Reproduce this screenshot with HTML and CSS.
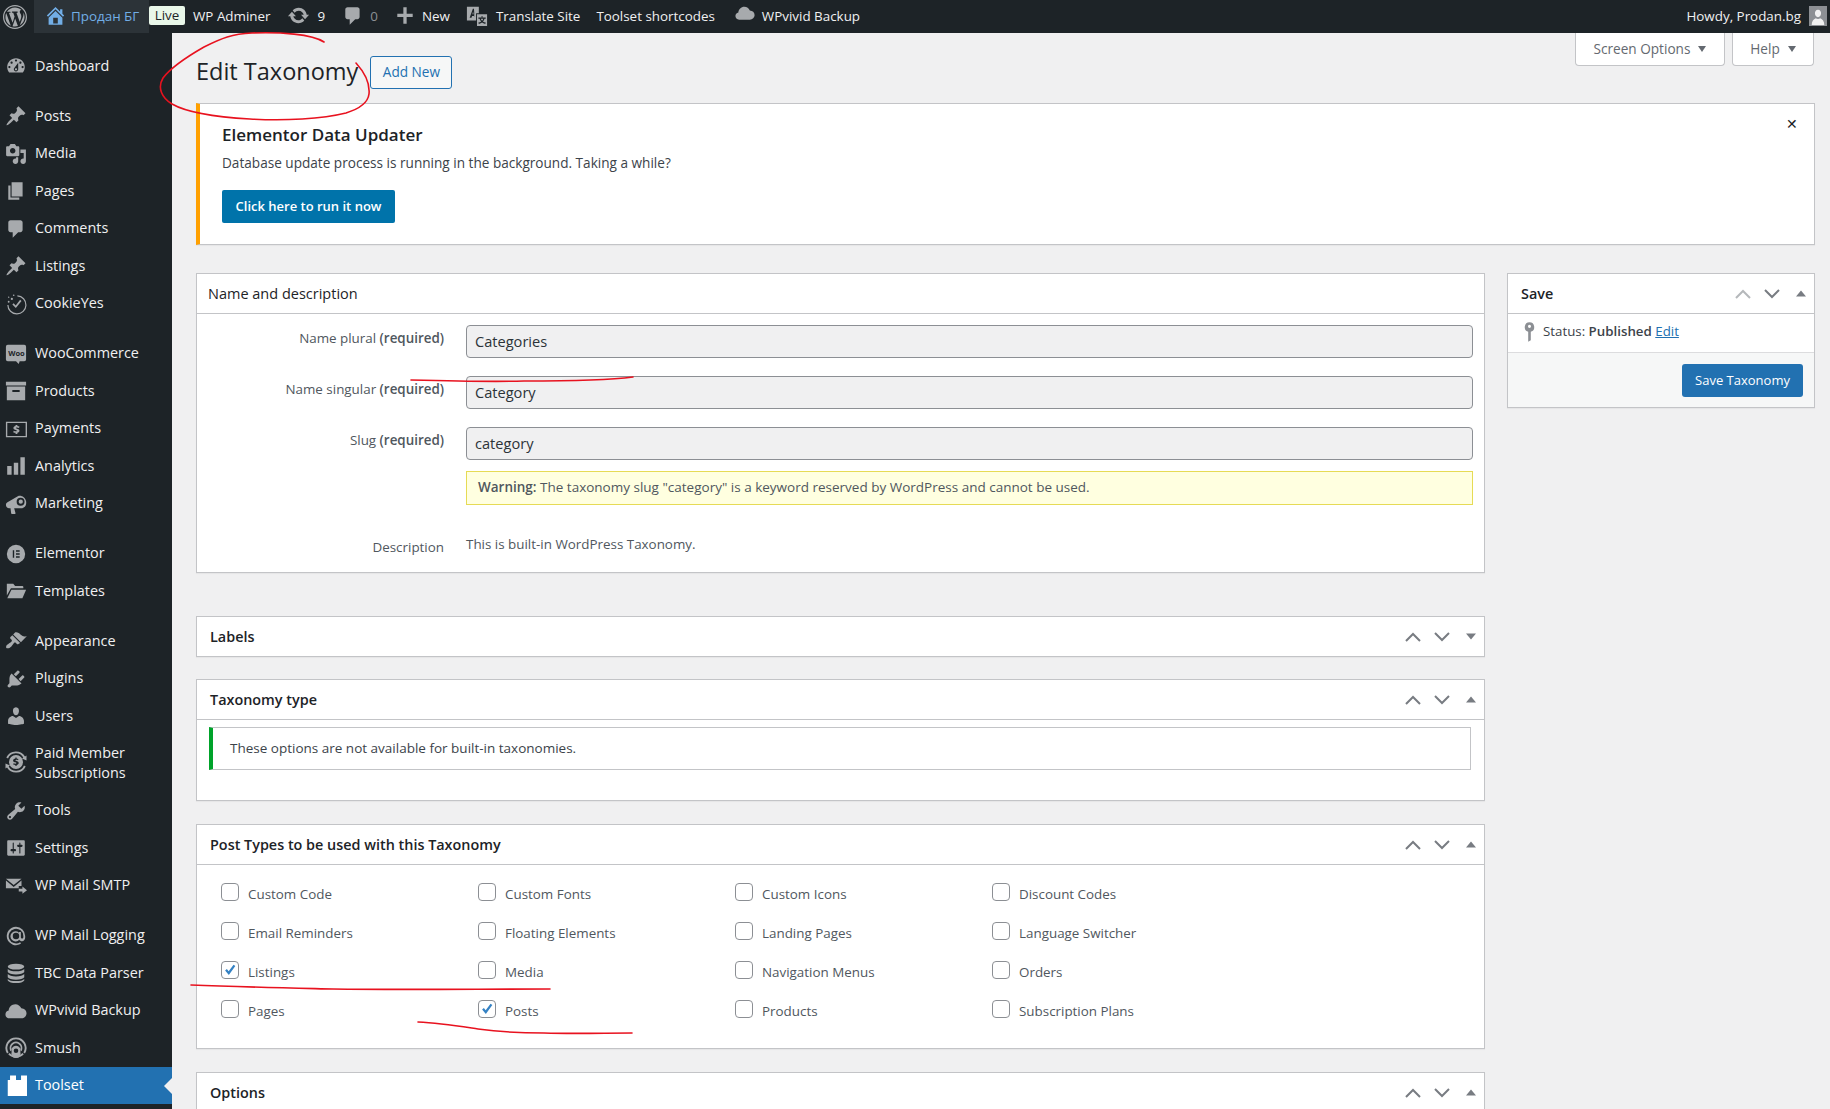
FILE: index.html
```html
<!DOCTYPE html>
<html>
<head>
    <meta charset="utf-8">
    <title>Edit Taxonomy</title>
    <link rel="stylesheet" href="styles.css">
</head>
<body>
<!-- icon sprite -->
<svg class="sprite" xmlns="http://www.w3.org/2000/svg">
    <symbol id="i-wp" viewBox="0 0 20 20"><path d="M20 10c0-5.52-4.48-10-10-10S0 4.48 0 10s4.48 10 10 10 10-4.48 10-10zM10 1.01c4.96 0 8.99 4.03 8.99 8.99s-4.03 8.99-8.99 8.99S1.01 14.96 1.01 10 5.04 1.01 10 1.01zM8.01 14.82L4.96 6.61c.49-.03 1.05-.08 1.05-.08.43-.05.38-1.01-.06-.99 0 0-1.29.1-2.13.1-.15 0-.33 0-.52-.01 1.44-2.17 3.9-3.6 6.7-3.6 2.09 0 3.99.79 5.41 2.09-.6-.08-1.45.35-1.45 1.42 0 .66.38 1.22.79 1.88.31.54.5 1.22.5 2.21 0 1.34-1.27 4.48-1.27 4.48l-2.71-7.5c.48-.03.75-.16.75-.16.43-.05.38-1.1-.05-1.08 0 0-1.3.11-2.14.11-.78 0-2.11-.11-2.11-.11-.43-.02-.48 1.06-.05 1.08l.84.08 1.12 3.04zm6.02 2.15L16.64 10s.67-1.69.39-3.81c.63 1.14.94 2.42.94 3.81 0 2.96-1.56 5.58-3.94 6.97zM2.68 6.77L6.5 17.25c-2.67-1.3-4.47-4.08-4.47-7.25 0-1.16.2-2.23.65-3.23zm7.45 4.53l2.29 6.25c-.75.27-1.57.42-2.42.42-.72 0-1.41-.11-2.06-.3z"/></symbol>
    <symbol id="i-home" viewBox="0 0 20 20"><path d="M16 8.5l1.53 1.53-1.06 1.06L10 4.62l-6.47 6.47-1.06-1.06L10 2.5l4 4v-2h2v4zm-6-2.46l6 5.99V18H4v-5.97zM12 17v-5H8v5h4z"/></symbol>
    <symbol id="i-update" viewBox="0 0 20 20"><path d="M10.2 3.28c3.53 0 6.43 2.61 6.92 6h2.08l-3.5 4-3.5-4h2.32c-.45-1.97-2.21-3.45-4.32-3.45-1.45 0-2.73.71-3.54 1.78L4.95 5.66C6.23 4.2 8.11 3.28 10.2 3.28zm-.4 13.44c-3.52 0-6.43-2.61-6.92-6H.8l3.5-4c1.17 1.33 2.33 2.67 3.5 4H5.48c.45 1.97 2.21 3.45 4.32 3.45 1.45 0 2.73-.71 3.54-1.78l1.71 1.95c-1.28 1.46-3.15 2.38-5.25 2.38z"/></symbol>
    <symbol id="i-comment" viewBox="0 0 20 20"><path d="M5 2h9c1.1 0 2 .9 2 2v7c0 1.1-.9 2-2 2h-2l-5 5v-5H5c-1.1 0-2-.9-2-2V4c0-1.1.9-2 2-2z"/></symbol>
    <symbol id="i-plus" viewBox="0 0 20 20"><path d="M17 8v3h-5.500v6h-3v-6H3V8h5.500V2h3v6z"/></symbol>
    <symbol id="i-translate" viewBox="0 0 24 24"><path d="M1 2h13v7h-3v8H1zM7.500 4 4 14h2l.6-2h2l.4 1V8.500L8.700 4zM7 10l.7-3 .6 3z" fill-rule="evenodd"/><path d="M12 10h11v13H12zM17 12v1.500h-3.500V15h1.300c.4 1.200 1 2.200 1.700 3-.8.600-1.800 1-3 1.200l.5 1.400c1.400-.3 2.600-.8 3.500-1.500.9.700 2 1.200 3.500 1.500l.5-1.400c-1.200-.2-2.200-.6-3-1.200.8-.8 1.400-1.800 1.700-3h1.300v-1.500H18V12zm-.9 3h2.800c-.2.800-.7 1.500-1.400 2.100-.7-.6-1.200-1.300-1.400-2.100z" fill-rule="evenodd"/></symbol>
    <symbol id="i-cloud" viewBox="0 0 24 20"><path d="M5 18c-2.800 0-4.500-2-4.500-4.300 0-2.100 1.400-3.800 3.500-4.200C4.300 5.500 7.400 2.500 11.200 2.500c3 0 5.500 1.800 6.600 4.500 3.300.1 5.700 2.400 5.700 5.500 0 3.100-2.500 5.500-5.700 5.500z"/></symbol>
    <symbol id="i-dashboard" viewBox="0 0 20 20"><path d="M3.760 16h12.480c1.100-1.370 1.760-3.110 1.760-5 0-4.420-3.580-8-8-8s-8 3.580-8 8c0 1.890.66 3.630 1.760 5zM10 4c.55 0 1 .45 1 1s-.45 1-1 1-1-.45-1-1 .45-1 1-1zM6 6c.55 0 1 .45 1 1s-.45 1-1 1-1-.45-1-1 .45-1 1-1zm8 0c.55 0 1 .45 1 1s-.45 1-1 1-1-.45-1-1 .45-1 1-1zm-5.370 5.550L12 7v6c0 1.100-.9 2-2 2s-2-.9-2-2c0-.57.24-1.080.63-1.450zM4 10c.55 0 1 .45 1 1s-.45 1-1 1-1-.45-1-1 .45-1 1-1zm12 0c.55 0 1 .45 1 1s-.45 1-1 1-1-.45-1-1 .45-1 1-1zm-5 3c0-.55-.45-1-1-1s-1 .45-1 1 .45 1 1 1 1-.45 1-1z"/></symbol>
    <symbol id="i-pin" viewBox="0 0 20 20"><path d="M10.440 3.020l1.820-1.820 6.360 6.350-1.830 1.820c-1.050-.68-2.480-.57-3.410.36l-.75.75c-.92.93-1.040 2.350-.35 3.410l-1.830 1.820-2.410-2.410-2.800 2.790c-.42.42-3.380 2.710-3.800 2.290s1.860-3.390 2.280-3.810l2.790-2.790L4.100 9.360l1.830-1.820c1.050.69 2.480.57 3.400-.36l.75-.75c.93-.92 1.050-2.350.36-3.410z"/></symbol>
    <symbol id="i-media" viewBox="0 0 20 20"><path d="M13 11V4c0-.55-.45-1-1-1h-1.670L9 1H5L3.670 3H2c-.55 0-1 .45-1 1v7c0 .55.45 1 1 1h10c.55 0 1-.45 1-1zM7 4.500c1.380 0 2.500 1.120 2.500 2.500S8.380 9.500 7 9.500 4.500 8.380 4.500 7 5.620 4.500 7 4.500zM14 6h5v10.500c0 1.380-1.120 2.500-2.500 2.500S14 17.880 14 16.500s1.120-2.500 2.500-2.500c.17 0 .34.02.5.05V9h-3V6zm-4 8.050V13h2v3.500c0 1.380-1.120 2.500-2.500 2.500S7 17.880 7 16.500 8.120 14 9.500 14c.17 0 .34.02.5.05z"/></symbol>
    <symbol id="i-page" viewBox="0 0 20 20"><path d="M6 15V2h10v13H6zm-1 1h8v2H3V5h2v11z"/></symbol>
    <symbol id="i-cookie" viewBox="0 0 24 24"><path d="M13.500 2.500a10.500 10.500 0 1 1-11 10.500h1.300a9.200 9.200 0 1 0 9.700-9.200z"/><path d="M8 12.500l1.400-1.300 2.300 2.400 4.800-6.200 1.500 1.200-6.200 7.800z"/><circle cx="4" cy="9.500" r="1"/><circle cx="7.500" cy="6.500" r="1.200"/><circle cx="9.500" cy="2.500" r=".9"/><circle cx="4" cy="4.500" r=".8"/></symbol>
    <symbol id="i-woo" viewBox="0 0 24 24"><path d="M3 2h18a2 2 0 0 1 2 2v14a2 2 0 0 1-2 2h-5l-1 3-3-3H3a2 2 0 0 1-2-2V4a2 2 0 0 1 2-2z"/></symbol>
    <symbol id="i-box" viewBox="0 0 24 24"><path d="M1 2h22v4H1zM2 7h20v15H2zM8 11v2h8v-2z" fill-rule="evenodd"/></symbol>
    <symbol id="i-pay" viewBox="0 0 24 24"><path d="M1 4h23v17H1zM2.500 5.500v14h20v-14z" fill-rule="evenodd"/><path d="M11.500 7.500h2v1.200c1 .1 1.700.3 2.300.6l-.5 1.600c-1.300-.6-3.300-.8-3.300 0 0 1.100 3.800.5 3.800 3 0 1.200-.9 2-2.300 2.200v1.400h-2v-1.300c-1-.1-1.800-.3-2.500-.7l.5-1.600c1.400.7 3.500 1 3.500.1 0-1.100-3.800-.5-3.800-3 0-1.200.9-2 2.300-2.200z"/></symbol>
    <symbol id="i-bars" viewBox="0 0 20 20"><path d="M18 18V2h-4v16h4zm-6 0V7H8v11h4zm-6 0v-8H2v8h4z"/></symbol>
    <symbol id="i-mega" viewBox="0 0 24 24"><path d="M1 13c0-1.500.7-2.600 1.700-3L14 3.500c3.500-1.500 8 1 9 5.500.8 4.500-2 8-6 7.500H10l1.500 5.500c0 .5-.2.800-.7.800H7.500c-.4 0-.7-.3-.8-.7L6 16.500H4.500C2.600 16.500 1 15 1 13z"/><circle cx="17" cy="9.500" r="4.300" fill="#1d2327"/><circle cx="17.200" cy="9.500" r="2.300"/></symbol>
    <symbol id="i-elementor" viewBox="0 0 24 24"><path d="M12 2a10 10 0 1 0 0 20 10 10 0 0 0 0-20zM8.500 8h1.500v8H8.500zM12 8h4v1.500h-4zM12 11.250h4v1.500h-4zM12 14.500h4V16h-4z" fill-rule="evenodd"/></symbol>
    <symbol id="i-folder" viewBox="0 0 24 24"><path d="M2 4h7l2 2.500h8c.6 0 1 .4 1 1V9H6.500L2 17z"/><path d="M7 10.500h16l-4 9.500H2.500z"/></symbol>
    <symbol id="i-brush" viewBox="0 0 20 20"><path d="M14.480 11.060L7.410 3.990l1.500-1.500c.5-.56 2.300-.47 3.510.32 1.210.8 1.430 1.280 2.910 2.100 1.180.64 2.450 1.260 4.450.85zm-.71.71L6.700 4.700 4.930 6.470c-.39.39-.39 1.020 0 1.410l1.060 1.060c.39.39.39 1.030 0 1.420-.6.6-1.430 1.110-2.210 1.690-.35.26-.7.53-1.010.84C1.430 13.230.91 14.270 1.020 16c.02.36.31.65.67.67 1.730.11 2.770-.41 4.120-1.750.31-.31.58-.66.84-1.010.58-.78 1.090-1.610 1.690-2.210.39-.39 1.030-.39 1.420 0l1.060 1.060c.39.39 1.020.39 1.410 0z"/></symbol>
    <symbol id="i-plug" viewBox="0 0 20 20"><path d="M13.110 4.360L9.870 7.600 8 5.730l3.240-3.240c.35-.34 1.050-.2 1.560.32.52.51.66 1.210.31 1.550zm-8 1.770l.91-1.120 9.010 9.010-1.190.84c-.71.71-2.630 1.160-3.820 1.160H6.140L4.900 17.260c-.59.59-1.540.59-2.120 0-.59-.58-.59-1.530 0-2.120l1.240-1.240v-3.880c0-1.130.4-3.190 1.090-3.890zm7.260 3.970l3.240-3.240c.34-.35 1.040-.21 1.550.31.52.51.66 1.210.31 1.550l-3.240 3.250z"/></symbol>
    <symbol id="i-users" viewBox="0 0 20 20"><path d="M10 9.250c-2.270 0-2.730-3.440-2.730-3.440C7 4.020 7.820 2 9.970 2c2.160 0 2.980 2.020 2.710 3.810 0 0-.41 3.440-2.680 3.440zm0 2.570L12.720 10c2.390 0 4.520 2.330 4.520 4.530v2.490s-3.650 1.130-7.240 1.130c-3.650 0-7.240-1.130-7.240-1.130v-2.490c0-2.250 1.940-4.480 4.470-4.480z"/></symbol>
    <symbol id="i-paid" viewBox="0 0 24 24"><path d="M12 1.500a10.500 10.500 0 0 1 9 5l1.500-1v5l-4.500-2 1.300-.9A8.500 8.500 0 0 0 4 8.500L2.300 7.500A10.500 10.500 0 0 1 12 1.500zM12 22.500a10.500 10.500 0 0 1-9-5l-1.500 1v-5l4.500 2-1.300.9A8.500 8.500 0 0 0 20 15.500l1.700 1a10.500 10.500 0 0 1-9.700 6z"/><path d="M12 5a7 7 0 1 0 0 14 7 7 0 0 0 0-14zm-.6 2.500h1.200v1c.6.100 1.200.2 1.800.5l-.4 1.200c-1.200-.5-2.500-.5-2.500.2 0 1 3.200.2 3.200 2.500 0 1-.8 1.800-2.100 2v1.100h-1.200v-1c-.8-.1-1.500-.2-2.200-.5l.4-1.200c1.100.5 2.800.6 2.800-.2 0-1.100-3.300-.2-3.300-2.500 0-1.100.9-1.900 2.300-2.100z" fill-rule="evenodd"/></symbol>
    <symbol id="i-wrench" viewBox="0 0 20 20"><path d="M16.680 9.770c-1.340 1.340-3.300 1.670-4.950.99l-5.410 6.520c-.99.99-2.590.99-3.580 0s-.99-2.590 0-3.570l6.520-5.420c-.68-1.650-.35-3.610.99-4.950 1.280-1.280 3.120-1.620 4.720-1.060l-2.890 2.890 2.820 2.820 2.860-2.870c.53 1.580.18 3.390-1.080 4.650zM3.810 16.210c.4.39 1.040.39 1.430 0 .4-.4.4-1.040 0-1.430-.39-.4-1.030-.4-1.430 0-.39.39-.39 1.030 0 1.430z"/></symbol>
    <symbol id="i-settings" viewBox="0 0 20 20"><path d="M18 16V4c0-.55-.45-1-1-1H3c-.55 0-1 .45-1 1v12c0 .55.45 1 1 1h14c.55 0 1-.45 1-1zM8 11h1c.55 0 1 .45 1 1s-.45 1-1 1H8v1.500c0 .28-.22.5-.5.5s-.5-.22-.5-.5V13H6c-.55 0-1-.45-1-1s.45-1 1-1h1V5.500c0-.28.22-.5.5-.5s.5.22.5.5V11zm5-2h-1c-.55 0-1-.45-1-1s.45-1 1-1h1V5.500c0-.28.22-.5.5-.5s.5.22.5.5V7h1c.55 0 1 .45 1 1s-.45 1-1 1h-1v5.500c0 .28-.22.5-.5.5s-.5-.22-.5-.5V9z"/></symbol>
    <symbol id="i-mail" viewBox="0 0 24 24"><path d="M1 4h17L9.500 11zM1 6l8.500 7L18 6v6h-3v2.500H1z"/><path d="M15 15h4v-2.500l5 4-5 4V18h-4z"/></symbol>
    <symbol id="i-at" viewBox="0 0 24 24"><path d="M12 2a10 10 0 1 0 5.500 18.300l-1-1.600A8 8 0 1 1 20 12v1c0 1-.6 1.800-1.400 1.800s-1.300-.7-1.300-1.700V7.500h-2v1A5.500 5.500 0 1 0 15.600 16c.6 1 1.700 1.700 3 1.700 2 0 3.400-1.800 3.400-4V12A10 10 0 0 0 12 2zm0 13.500a3.500 3.500 0 1 1 0-7 3.500 3.500 0 0 1 0 7z"/></symbol>
    <symbol id="i-db" viewBox="0 0 24 24"><ellipse cx="12" cy="5" rx="9" ry="3.200"/><path d="M3 7.500c1.500 1.800 4.500 2.500 9 2.500s7.500-.7 9-2.500V11c-1 1.700-4.500 2.600-9 2.600S4 12.700 3 11zM3 13.200c1.500 1.800 4.500 2.500 9 2.500s7.500-.7 9-2.500v3.500c-1 1.700-4.500 2.600-9 2.600S4 18.400 3 16.700zM3 18.500c1.500 1.700 4.500 2.300 9 2.300s7.500-.6 9-2.300v1.700c-1 1.800-4.500 2.800-9 2.800S4 22 3 20.200z"/></symbol>
    <symbol id="i-smush" viewBox="0 0 24 24"><path d="M12 .5a11.500 11.500 0 0 0-9.800 17.500l1.700-1a9.500 9.500 0 1 1 16.200 0l1.700 1A11.500 11.500 0 0 0 12 .5zm0 4.500a7 7 0 0 0-6 10.500l1.700-1a5 5 0 1 1 8.600 0l1.700 1A7 7 0 0 0 12 5zm0 4.500a5 5 0 0 0-4.700 6.800 5 5 0 1 0 9.400 0A5 5 0 0 0 12 9.500zm0 3a2.500 2.500 0 1 1 0 5 2.500 2.500 0 0 1 0-5z" fill-rule="evenodd"/><path d="M12 20.800a9 9 0 0 1-7-3.300l-1.500 1.200a11.500 11.500 0 0 0 17 0L19 17.500a9 9 0 0 1-7 3.300z"/></symbol>
    <symbol id="i-toolset" viewBox="0 0 24 24"><path d="M3 5.500h2.500V.5h6.500v5h5.500V.5H24V23H3z"/></symbol>
    <symbol id="i-key" viewBox="0 0 12 20"><path d="M6 1a4.500 4.500 0 0 0-1.200 8.800V19l2.400-1.500V9.800A4.500 4.500 0 0 0 6 1zm0 2.400a1.400 1.400 0 1 1 0 2.800 1.400 1.400 0 0 1 0-2.800z" fill-rule="evenodd"/></symbol>
    <symbol id="i-up" viewBox="0 0 16 10"><path d="M1 9l7-7 7 7" fill="none" stroke="currentColor" stroke-width="2"/></symbol>
    <symbol id="i-down" viewBox="0 0 16 10"><path d="M1 1l7 7 7-7" fill="none" stroke="currentColor" stroke-width="2"/></symbol>
    <symbol id="i-open" viewBox="0 0 10 6"><path d="M0 6l5-6 5 6z"/></symbol>
    <symbol id="i-shut" viewBox="0 0 10 6"><path d="M0 0l5 6 5-6z"/></symbol>
</svg>

<div class="adminbar">
    <a class="bar-logo"><svg class="bar-ic wp"><use href="#i-wp"/></svg></a>
    <a class="bar-site"><svg class="bar-ic home"><use href="#i-home"/></svg>Продан БГ</a>
    <span class="live">Live</span>
    <a class="bar-item ml-8">WP Adminer</a>
    <a class="bar-item ml-16"><svg class="bar-ic up"><use href="#i-update"/></svg>9</a>
    <a class="bar-item ml-17 dim"><svg class="bar-ic cm"><use href="#i-comment"/></svg>0</a>
    <a class="bar-item ml-16"><svg class="bar-ic plus"><use href="#i-plus"/></svg>New</a>
    <a class="bar-item ml-16"><svg class="bar-ic tr"><use href="#i-translate"/></svg>Translate Site</a>
    <a class="bar-item ml-16">Toolset shortcodes</a>
    <a class="bar-item ml-20"><svg class="bar-ic cl"><use href="#i-cloud"/></svg>WPvivid Backup</a>
    <a class="bar-howdy">Howdy, Prodan.bg<span class="avatar"><svg viewBox="0 0 20 20"><path d="M10 3c2.400 0 3.600 2 3.400 4.300-.2 2.200-1.400 4-3.400 4s-3.200-1.800-3.400-4C6.400 5 7.600 3 10 3zM3 20c0-4 2-6.500 4.500-7.500 1.500 1 3.500 1 5 0C15 13.500 17 16 17 20z"/></svg></span></a>
</div>

<div class="wrap">
    <nav class="sidebar">
        <a class="menu"><svg><use href="#i-dashboard"/></svg>Dashboard</a>
        <div class="sep"></div>
        <a class="menu"><svg><use href="#i-pin"/></svg>Posts</a>
        <a class="menu"><svg><use href="#i-media"/></svg>Media</a>
        <a class="menu"><svg><use href="#i-page"/></svg>Pages</a>
        <a class="menu"><svg><use href="#i-comment"/></svg>Comments</a>
        <a class="menu"><svg><use href="#i-pin"/></svg>Listings</a>
        <a class="menu"><svg><use href="#i-cookie"/></svg>CookieYes</a>
        <div class="sep"></div>
        <a class="menu"><svg><use href="#i-woo"/></svg><span class="woo-mark">Woo</span>WooCommerce</a>
        <a class="menu"><svg><use href="#i-box"/></svg>Products</a>
        <a class="menu"><svg><use href="#i-pay"/></svg>Payments</a>
        <a class="menu"><svg><use href="#i-bars"/></svg>Analytics</a>
        <a class="menu"><svg><use href="#i-mega"/></svg>Marketing</a>
        <div class="sep"></div>
        <a class="menu"><svg><use href="#i-elementor"/></svg>Elementor</a>
        <a class="menu"><svg><use href="#i-folder"/></svg>Templates</a>
        <div class="sep"></div>
        <a class="menu"><svg><use href="#i-brush"/></svg>Appearance</a>
        <a class="menu"><svg><use href="#i-plug"/></svg>Plugins</a>
        <a class="menu"><svg><use href="#i-users"/></svg>Users</a>
        <a class="menu tall"><svg><use href="#i-paid"/></svg>Paid Member<br>Subscriptions</a>
        <a class="menu"><svg><use href="#i-wrench"/></svg>Tools</a>
        <a class="menu"><svg><use href="#i-settings"/></svg>Settings</a>
        <a class="menu"><svg><use href="#i-mail"/></svg>WP Mail SMTP</a>
        <div class="sep"></div>
        <a class="menu"><svg><use href="#i-at"/></svg>WP Mail Logging</a>
        <a class="menu"><svg><use href="#i-db"/></svg>TBC Data Parser</a>
        <a class="menu"><svg><use href="#i-cloud"/></svg>WPvivid Backup</a>
        <a class="menu"><svg><use href="#i-smush"/></svg>Smush</a>
        <a class="menu current"><svg><use href="#i-toolset"/></svg>Toolset</a>
    </nav>

    <main class="content">
        <div class="meta-tabs">
            <a class="meta-tab screen-tab">Screen Options<i class="caret"></i></a>
            <a class="meta-tab help-tab">Help<i class="caret"></i></a>
        </div>
        <div class="title-row">
            <h1>Edit Taxonomy</h1>
            <a class="add-new">Add New</a>
        </div>

        <div class="update-notice">
            <h2>Elementor Data Updater</h2>
            <p>Database update process is running in the background. Taking a while?</p>
            <a class="run-btn">Click here to run it now</a>
            <span class="dismiss">&#10005;</span>
        </div>

        <div class="columns">
            <div class="col-main">
                <section class="box">
                    <div class="box-head plain"><h3>Name and description</h3></div>
                    <div class="form-grid">
                        <label>Name plural <b>(required)</b></label>
                        <input class="field" type="text" value="Categories" readonly>
                        <label>Name singular <b>(required)</b></label>
                        <input class="field" type="text" value="Category" readonly>
                        <label>Slug <b>(required)</b></label>
                        <div class="slug-cell">
                            <input class="field" type="text" value="category" readonly>
                            <div class="warning"><b>Warning:</b> The taxonomy slug "category" is a keyword reserved by WordPress and cannot be used.</div>
                        </div>
                        <label class="desc-label">Description</label>
                        <div class="desc-value">This is built-in WordPress Taxonomy.</div>
                    </div>
                </section>

                <section class="box labels-box">
                    <div class="box-head closed">
                        <h3>Labels</h3>
                        <div class="handles"><svg class="chev"><use href="#i-up"/></svg><svg class="chev"><use href="#i-down"/></svg><svg class="tri"><use href="#i-shut"/></svg></div>
                    </div>
                </section>

                <section class="box type-box">
                    <div class="box-head">
                        <h3>Taxonomy type</h3>
                        <div class="handles"><svg class="chev"><use href="#i-up"/></svg><svg class="chev"><use href="#i-down"/></svg><svg class="tri"><use href="#i-open"/></svg></div>
                    </div>
                    <div class="type-body">
                        <div class="info-notice">These options are not available for built-in taxonomies.</div>
                    </div>
                </section>

                <section class="box types-box">
                    <div class="box-head">
                        <h3>Post Types to be used with this Taxonomy</h3>
                        <div class="handles"><svg class="chev"><use href="#i-up"/></svg><svg class="chev"><use href="#i-down"/></svg><svg class="tri"><use href="#i-open"/></svg></div>
                    </div>
                    <div class="check-grid">
                        <label class="check"><i class="cb"></i>Custom Code</label>
                        <label class="check"><i class="cb"></i>Custom Fonts</label>
                        <label class="check"><i class="cb"></i>Custom Icons</label>
                        <label class="check"><i class="cb"></i>Discount Codes</label>
                        <label class="check"><i class="cb"></i>Email Reminders</label>
                        <label class="check"><i class="cb"></i>Floating Elements</label>
                        <label class="check"><i class="cb"></i>Landing Pages</label>
                        <label class="check"><i class="cb"></i>Language Switcher</label>
                        <label class="check"><i class="cb on"><svg viewBox="0 0 18 18"><path d="M3.500 9.500l2-1.700 2 2.700L13 3l2 1.500-7.300 10z"/></svg></i>Listings</label>
                        <label class="check"><i class="cb"></i>Media</label>
                        <label class="check"><i class="cb"></i>Navigation Menus</label>
                        <label class="check"><i class="cb"></i>Orders</label>
                        <label class="check"><i class="cb"></i>Pages</label>
                        <label class="check"><i class="cb on"><svg viewBox="0 0 18 18"><path d="M3.500 9.500l2-1.700 2 2.700L13 3l2 1.500-7.300 10z"/></svg></i>Posts</label>
                        <label class="check"><i class="cb"></i>Products</label>
                        <label class="check"><i class="cb"></i>Subscription Plans</label>
                    </div>
                </section>

                <section class="box options-box">
                    <div class="box-head">
                        <h3>Options</h3>
                        <div class="handles"><svg class="chev"><use href="#i-up"/></svg><svg class="chev"><use href="#i-down"/></svg><svg class="tri"><use href="#i-open"/></svg></div>
                    </div>
                </section>
            </div>

            <aside class="col-side">
                <section class="box">
                    <div class="box-head">
                        <h3>Save</h3>
                        <div class="handles"><svg class="chev faded"><use href="#i-up"/></svg><svg class="chev"><use href="#i-down"/></svg><svg class="tri"><use href="#i-open"/></svg></div>
                    </div>
                    <div class="status-row"><svg class="key"><use href="#i-key"/></svg>Status: <b>Published</b> <a class="link">Edit</a></div>
                    <div class="save-foot"><a class="save-btn">Save Taxonomy</a></div>
                </section>
            </aside>
        </div>
    </main>
</div>

<!-- red marker strokes someone drew on the screenshot -->
<svg class="scribble" viewBox="0 0 1830 1109">
    <path d="M324 42C312 34 280 32 252 33C232 34 222 38 204 47C190 55 172 66 163 78C157 88 162 98 172 104C186 112 215 117 250 119C285 121 322 119 346 113C362 108 368 102 369 94C370 84 366 74 356 63"/>
    <path d="M411 380C450 381 490 382 524 381C570 381 610 380 633 377"/>
    <path d="M191 985C240 987 290 988 333 989C400 990 480 989 550 989"/>
    <path d="M418 1022C440 1023 458 1026 478 1029C500 1032 522 1033 544 1033C575 1034 605 1033 632 1033"/>
</svg>
</body>
</html>
```
FILE: styles.css
```css
* {
    box-sizing: border-box;
}

html, body {
    margin: 0;
    padding: 0;
    height: 1109px;
    overflow: hidden;
}

body {
    position: relative;
    font-family: "Open Sans", "Noto Sans", sans-serif;
    font-size: 13.6px;
    line-height: 20px;
    color: #3c434a;
    background-color: #f0f0f1;
}

.sprite {
    display: none;
}

/* top bar */
.adminbar {
    display: flex;
    align-items: center;
    height: 33px;
    background-color: #1d2327;
    color: #f0f0f1;
    font-size: 13.4px;
}

.bar-logo {
    display: flex;
    width: 34px;
    padding-left: 3px;
}

.bar-ic {
    fill: #a7aaad;
    flex: none;
}

.bar-ic.wp { width: 24px; height: 24px; }
.bar-ic.home { width: 23px; height: 23px; margin-right: 4px; fill: #72aee6; }
.bar-ic.up { width: 23px; height: 23px; margin-right: 8px; }
.bar-ic.cm { width: 22px; height: 22px; margin-right: 6px; }
.bar-ic.plus { width: 22px; height: 22px; margin-right: 6px; }
.bar-ic.tr { width: 22px; height: 22px; margin-right: 8px; }
.bar-ic.cl { width: 20px; height: 18px; margin-right: 7px; margin-top: -6px; }

.bar-site {
    display: flex;
    align-items: center;
    height: 33px;
    width: 115px;
    padding: 0 0 2px 10px;
    background-color: #2c3338;
    color: #72aee6;
}

.live {
    display: block;
    width: 36px;
    height: 19px;
    margin-bottom: 2px;
    line-height: 19px;
    text-align: center;
    background-color: #e9f7e9;
    color: #1d2327;
    border-radius: 2px;
}

.bar-item {
    display: flex;
    align-items: center;
    padding-bottom: 2px;
}

.bar-item.dim {
    color: #8c8f94;
}

.ml-8 { margin-left: 8px; }
.ml-16 { margin-left: 16px; }
.ml-17 { margin-left: 17px; }
.ml-20 { margin-left: 20px; }

.bar-howdy {
    display: flex;
    align-items: center;
    margin-left: auto;
    padding: 0 3px 2px 0;
}

.avatar {
    display: block;
    width: 18px;
    height: 20px;
    margin-left: 8px;
    background-color: #8c8f94;
}

.avatar svg {
    display: block;
    width: 18px;
    height: 20px;
    fill: #f0f0f1;
}

/* layout */
.wrap {
    display: flex;
    height: 1076px;
}

.sidebar {
    flex: none;
    display: flex;
    flex-direction: column;
    width: 172px;
    padding-top: 14px;
    background-color: #1d2327;
}

.menu {
    position: relative;
    display: flex;
    align-items: center;
    flex: none;
    height: 37.5px;
    padding-left: 35px;
    color: #f0f0f1;
    font-size: 14.4px;
}

.menu svg {
    position: absolute;
    left: 5px;
    top: 8px;
    width: 22px;
    height: 22px;
    fill: #a7aaad;
}

.menu.tall {
    height: 57px;
    line-height: 20px;
    display: block;
    padding-top: 8px;
}

.menu.tall svg {
    left: 4px;
    top: 15px;
    width: 24px;
    height: 24px;
}

.sep {
    flex: none;
    height: 12.5px;
}

.menu.current {
    background-color: #2271b1;
    color: #fff;
}

.menu.current svg {
    fill: #fff;
}

.menu.current::after {
    content: "";
    position: absolute;
    right: 0;
    top: 11px;
    border: 8px solid transparent;
    border-left-width: 0;
    border-right-color: #f0f0f1;
}

.woo-mark {
    position: absolute;
    left: 8px;
    top: 13px;
    width: 17px;
    text-align: center;
    font-size: 7.5px;
    line-height: 10px;
    font-weight: 700;
    color: #1d2327;
}

.content {
    flex: 1;
    min-width: 0;
    padding: 0 15px 0 24px;
}

.meta-tabs {
    float: right;
    display: flex;
    gap: 7px;
    margin-right: 1px;
}

.meta-tab {
    display: flex;
    align-items: center;
    justify-content: center;
    height: 33px;
    background-color: #fff;
    border: 1px solid #c3c4c7;
    border-top: 0;
    border-radius: 0 0 4px 4px;
    color: #646970;
}

.screen-tab { width: 150px; }
.help-tab { width: 82px; }

.caret {
    display: block;
    margin-left: 8px;
    border: 4.5px solid transparent;
    border-top: 6px solid #646970;
    border-bottom: 0;
}

.title-row {
    display: flex;
    align-items: flex-start;
    height: 70px;
    padding-top: 20px;
}

h1 {
    margin: 0;
    font-size: 23.5px;
    font-weight: 400;
    line-height: 36px;
    color: #1d2327;
}

.add-new {
    display: block;
    height: 33px;
    width: 82px;
    margin: 3px 0 0 12px;
    line-height: 30px;
    text-align: center;
    color: #2271b1;
    background-color: #f6f7f7;
    border: 1px solid #2271b1;
    border-radius: 3px;
}

.update-notice {
    position: relative;
    height: 142px;
    padding: 18px 0 0 22px;
    background-color: #fff;
    border: 1px solid #c3c4c7;
    border-left: 4px solid #ffa000;
    box-shadow: 0 1px 1px rgba(0, 0, 0, 0.04);
}

.update-notice h2 {
    margin: 0;
    font-size: 17px;
    font-weight: 600;
    line-height: 25px;
    color: #1d2327;
}

.update-notice p {
    margin: 6px 0 0;
    line-height: 20px;
}

.run-btn {
    display: block;
    width: 173px;
    height: 33px;
    margin-top: 17px;
    line-height: 33px;
    text-align: center;
    font-weight: 600;
    font-size: 13px;
    color: #fff;
    background-color: #0073aa;
    border-radius: 2px;
}

.dismiss {
    position: absolute;
    right: 16px;
    top: 10px;
    font-size: 14px;
    color: #1d2327;
}

.columns {
    display: flex;
    gap: 22px;
    margin-top: 28px;
}

.col-main {
    width: 1289px;
    flex: none;
}

.col-side {
    flex: 1;
}

/* boxes */
.box {
    background-color: #fff;
    border: 1px solid #c3c4c7;
    box-shadow: 0 1px 1px rgba(0, 0, 0, 0.04);
}

.box-head {
    display: flex;
    align-items: center;
    justify-content: space-between;
    height: 40px;
    padding-left: 13px;
    border-bottom: 1px solid #c3c4c7;
}

.box-head.plain {
    padding-left: 11px;
}

.box-head h3 {
    margin: 0;
    font-size: 14.4px;
    font-weight: 600;
    color: #1d2327;
}

.box-head.plain h3 {
    font-weight: 400;
    font-size: 14.5px;
}

.box-head.closed {
    height: 39px;
    border-bottom: 0;
}

.handles {
    display: flex;
    align-items: center;
    color: #787c82;
}

.handles svg {
    display: block;
    flex: none;
}

.chev {
    width: 16px;
    height: 10px;
    margin-right: 13px;
}

.chev.faded {
    color: #b5b8bb;
}

.tri {
    width: 10px;
    height: 7px;
    margin: 0 8px 0 3px;
    fill: #787c82;
}

/* name and description */
.form-grid {
    display: grid;
    grid-template-columns: 247px 1fr;
    column-gap: 22px;
    row-gap: 18px;
    padding: 11px 11px 15px 0;
}

.form-grid label {
    padding-top: 3px;
    text-align: right;
    color: #50575e;
    font-size: 13.4px;
}

.form-grid label b {
    font-weight: 600;
}

.field {
    display: block;
    width: 100%;
    height: 33px;
    padding: 0 8px 1px;
    font: inherit;
    font-size: 14.6px;
    color: #2c3338;
    background-color: #f0f0f1;
    border: 1px solid #8c8f94;
    border-radius: 4px;
}

.slug-cell {
    display: flex;
    flex-direction: column;
    gap: 11px;
}

.warning {
    height: 34px;
    padding-left: 11px;
    line-height: 31px;
    font-size: 13.5px;
    color: #50575e;
    background-color: #ffffe0;
    border: 1px solid #e6db55;
}

.warning b {
    font-weight: 600;
}

.form-grid .desc-label {
    padding-top: 14px;
}

.desc-value {
    padding-top: 11px;
    font-size: 13.4px;
    color: #50575e;
}

.labels-box {
    margin-top: 43px;
}

.type-box {
    margin-top: 22px;
}

.type-body {
    height: 80px;
    padding: 7px 13px 0 12px;
}

.info-notice {
    height: 43px;
    padding-left: 17px;
    line-height: 41px;
    font-size: 13.5px;
    border: 1px solid #c3c4c7;
    border-left: 4px solid #00a32a;
}

.types-box {
    margin-top: 23px;
}

.check-grid {
    display: grid;
    grid-template-columns: repeat(4, 257px);
    grid-auto-rows: 39px;
    height: 183px;
    padding: 18px 0 0 24px;
}

.check {
    display: flex;
    align-items: flex-start;
    font-size: 13.4px;
    color: #50575e;
    line-height: 22px;
}

.cb {
    display: block;
    flex: none;
    width: 18px;
    height: 18px;
    margin-right: 9px;
    background-color: #fff;
    border: 1px solid #8c8f94;
    border-radius: 4px;
}

.cb svg {
    display: block;
    width: 16px;
    height: 16px;
    fill: #3582c4;
}

.options-box {
    margin-top: 23px;
    height: 60px;
}

/* save box */
.status-row {
    height: 39px;
    padding: 7px 0 0 35px;
    position: relative;
    font-size: 13.3px;
    border-bottom: 1px solid #dcdcde;
}

.status-row b {
    font-weight: 600;
}

.key {
    position: absolute;
    left: 15px;
    top: 7px;
    width: 13px;
    height: 22px;
    fill: #8c8f94;
}

.link {
    color: #2271b1;
    text-decoration: underline;
}

.save-foot {
    display: flex;
    justify-content: flex-end;
    height: 54px;
    padding: 11px 11px 0 0;
    background-color: #f6f7f7;
}

.save-btn {
    display: block;
    width: 121px;
    height: 33px;
    line-height: 33px;
    text-align: center;
    font-size: 13px;
    color: #fff;
    background-color: #2271b1;
    border-radius: 3px;
}

/* marker overlay */
.scribble {
    position: absolute;
    left: 0;
    top: 0;
    width: 1830px;
    height: 1109px;
    pointer-events: none;
    fill: none;
    stroke: #e8121f;
    stroke-width: 1.6;
    stroke-linecap: round;
}
```
